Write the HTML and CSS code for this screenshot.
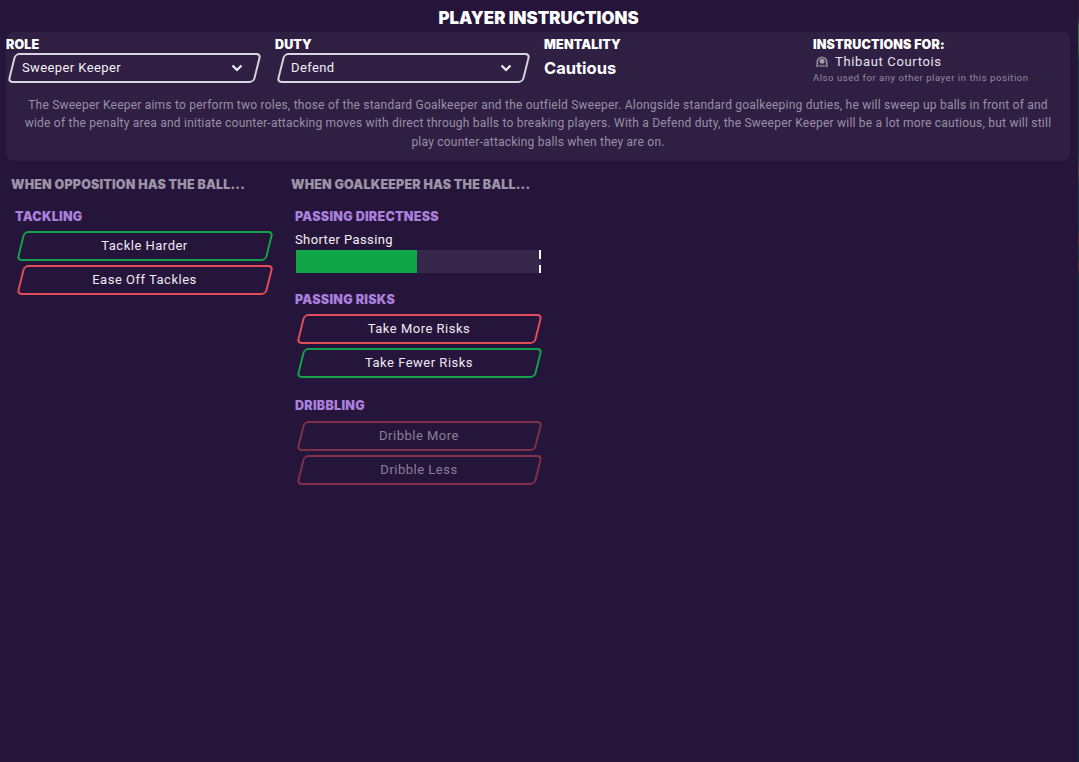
FILE: index.html
```html
<!DOCTYPE html>
<html lang="en">
<head>
<meta charset="utf-8">
<title>Player Instructions</title>
<link rel="stylesheet" href="styles.css">
</head>
<body>
<main class="page">
  <h1 class="title">PLAYER INSTRUCTIONS</h1>
  <section class="panel">
    <div class="top-grid">
      <div class="field">
        <div class="label">ROLE</div>
        <div class="slant select"><span>Sweeper Keeper</span>
          <svg class="chev" width="12" height="8" viewBox="0 0 12 8"><path d="M1.500 1.500 6 6l4.500-4.500" fill="none" stroke="#f2eef5" stroke-width="2.200"/></svg>
        </div>
      </div>
      <div class="field">
        <div class="label">DUTY</div>
        <div class="slant select"><span>Defend</span>
          <svg class="chev" width="12" height="8" viewBox="0 0 12 8"><path d="M1.500 1.500 6 6l4.500-4.500" fill="none" stroke="#f2eef5" stroke-width="2.200"/></svg>
        </div>
      </div>
      <div class="field">
        <div class="label">MENTALITY</div>
        <div class="mentality">Cautious</div>
      </div>
      <div class="field">
        <div class="label">INSTRUCTIONS FOR:</div>
        <div class="player">
          <svg width="12" height="12" viewBox="0 0 12 12"><path d="M1.300 11V6a4.700 4.700 0 0 1 9.400 0v5" fill="none" stroke="#8f8696" stroke-width="1.800"/><circle cx="6" cy="5.300" r="2.500" fill="#a59cab"/><path d="M2.500 9.800C3.500 8.500 8.500 8.500 9.500 9.800V11H2.500Z" fill="#6f6579"/></svg>
          <span>Thibaut Courtois</span>
        </div>
        <div class="note">Also used for any other player in this position</div>
      </div>
    </div>
    <p class="desc">The Sweeper Keeper aims to perform two roles, those of the standard Goalkeeper and the outfield Sweeper. Alongside standard goalkeeping duties, he will sweep up balls in front of and wide of the penalty area and initiate counter-attacking moves with direct through balls to breaking players. With a Defend duty, the Sweeper Keeper will be a lot more cautious, but will still play counter-attacking balls when they are on.</p>
  </section>
  <div class="columns">
    <section class="col col-a">
      <h2 class="col-head">WHEN OPPOSITION HAS THE BALL...</h2>
      <div class="group">
        <h3 class="group-head">TACKLING</h3>
        <div class="slant btn green">Tackle Harder</div>
        <div class="slant btn red">Ease Off Tackles</div>
      </div>
    </section>
    <section class="col col-b">
      <h2 class="col-head">WHEN GOALKEEPER HAS THE BALL...</h2>
      <div class="group">
        <h3 class="group-head">PASSING DIRECTNESS</h3>
        <div class="bar-label">Shorter Passing</div>
        <div class="bar"><div class="bar-fill"></div><div class="bar-mark"></div></div>
      </div>
      <div class="group">
        <h3 class="group-head">PASSING RISKS</h3>
        <div class="slant btn red">Take More Risks</div>
        <div class="slant btn green">Take Fewer Risks</div>
      </div>
      <div class="group group-last">
        <h3 class="group-head">DRIBBLING</h3>
        <div class="slant btn off">Dribble More</div>
        <div class="slant btn off">Dribble Less</div>
      </div>
    </section>
  </div>
</main>
<div class="edge"></div>
</body>
</html>
```
FILE: styles.css
```css
* { box-sizing: border-box; }
html, body { margin: 0; height: 100%; }
body {
  display: flex;
  background: #26153a;
  color: #f4f0f7;
  font-family: Roboto, "Liberation Sans", sans-serif;
  overflow: hidden;
}
.page { width: 1078px; height: 762px; padding: 8px 8px 0 6px; }
.edge {
  width: 1px;
  height: 762px;
  background: linear-gradient(#2a1a3a 0 18px, #3f6a4a 26px, #2d5a45 50px, #12383a 62px, #12383a 150px, #4a4450 170px, #12383a 190px, #12383a 228px, #5a2c3c 238px, #12383a 248px, #12383a 258px, #5a2c3c 266px, #0e2e33 276px);
}
h1, h2, h3, p { margin: 0; }
.title {
  font: 900 16.800px/20px Inter, "Liberation Sans", sans-serif;
  text-align: center;
  color: #fff;
  padding-left: 1px;
}
.panel {
  margin-top: 4px;
  height: 129px;
  background: #2f1f43;
  border-radius: 8px;
}
.top-grid { display: grid; grid-template-columns: repeat(4, 269px); }
.field { min-width: 0; }
.label {
  font: 900 12.500px/15px Inter, "Liberation Sans", sans-serif;
  letter-spacing: 0.15px;
  color: #fff;
  padding-top: 5px;
}
.slant { position: relative; }
.slant::before {
  content: "";
  position: absolute;
  inset: 0 2.500px;
  border: 2px solid #ddd;
  border-radius: 5px;
  transform: skewX(-14deg);
}
.select {
  display: flex;
  align-items: center;
  justify-content: space-between;
  width: 252px;
  height: 30px;
  margin: 1px 0 0 2px;
  padding: 0 17px 2px 14px;
  font-size: 13px;
  letter-spacing: 0.4px;
}
.select::before { border-color: #d9d4de; }
.chev { margin-top: 2px; }
.mentality { font: 700 16.500px/20px Inter, "Liberation Sans", sans-serif; color: #fff; margin-top: 6px; }
.player {
  display: flex;
  align-items: center;
  gap: 7px;
  height: 17px;
  margin-top: 1px;
  padding-left: 3px;
  font-size: 13px;
  letter-spacing: 0.65px;
  color: #e8e3ee;
}
.note { font-size: 9.500px; letter-spacing: 0.55px; line-height: 14px; margin-top: 1px; color: #968b9f; }
.desc {
  margin-top: 10.500px;
  padding: 0 16px;
  font-size: 12px;
  line-height: 18.500px;
  letter-spacing: 0.22px;
  text-align: center;
  color: #9a8fa6;
}
.columns { display: flex; margin-top: 16px; }
.col-a { width: 280px; padding-left: 5px; }
.col-b { width: 258px; padding-left: 5px; }
.col-b .btn { width: 244px; }
.col-head {
  font: 900 12.500px/16px Inter, "Liberation Sans", sans-serif;
  letter-spacing: 0.17px;
  color: #9d93a6;
  white-space: nowrap;
}
.group { padding-left: 4px; }
.col-head + .group { margin-top: 16px; }
.group + .group { margin-top: 19px; }
.group + .group-last { margin-top: 20px; }
.group-head {
  font: 900 12.500px/16px Inter, "Liberation Sans", sans-serif;
  letter-spacing: 0.27px;
  color: #a97fdc;
  margin-bottom: 6px;
}
.group-last .group-head { margin-bottom: 7px; }
.btn {
  width: 255px;
  height: 30px;
  margin: 0 0 4px 2px;
  padding-bottom: 2px;
  display: flex;
  align-items: center;
  justify-content: center;
  font-size: 13px;
  letter-spacing: 0.5px;
  color: #eee8f4;
}
.green::before { border-color: #12a24a; }
.red::before { border-color: #e24e58; }
.off { color: #8a7f98; }
.off::before { border-color: #7e3148; }
.bar-label { font-size: 13px; line-height: 17px; letter-spacing: 0.4px; height: 17px; margin-bottom: 2px; color: #f4f0f7; }
.bar { position: relative; width: 245px; height: 23px; margin-left: 1px; background: #37274a; }
.bar-fill { width: 121px; height: 100%; background: #10a548; }
.bar-mark {
  position: absolute;
  right: 0;
  top: 0;
  width: 2px;
  height: 100%;
  background: linear-gradient(#fff 0 9px, transparent 9px 15px, #fff 15px);
}
```
